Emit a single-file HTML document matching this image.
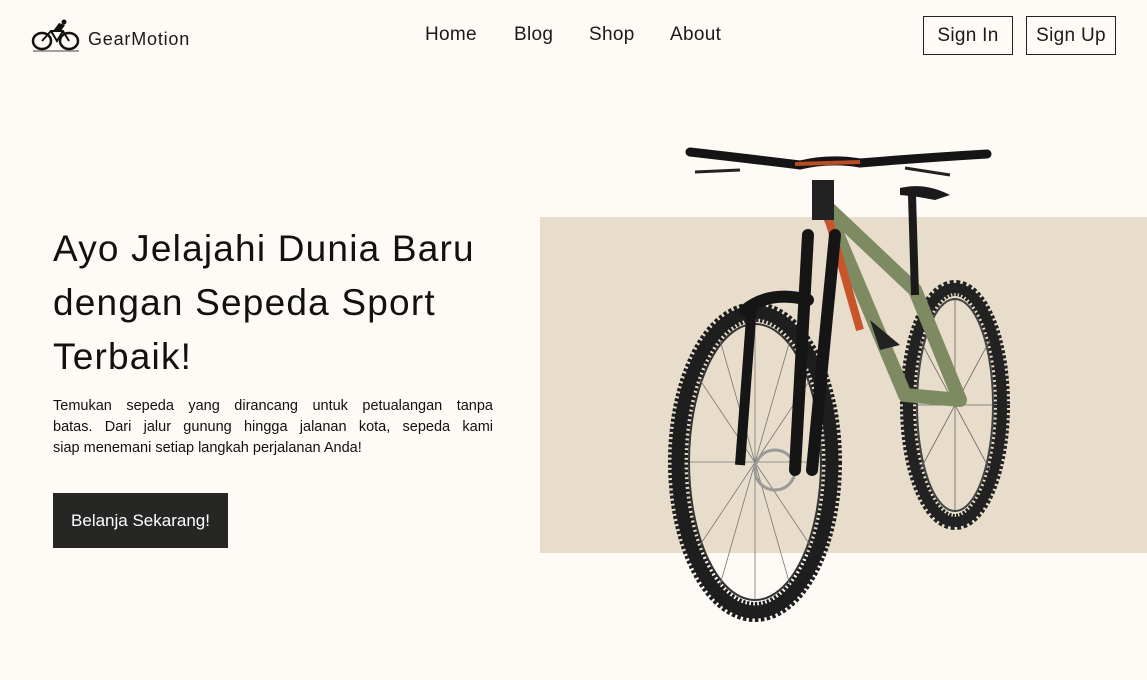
<!DOCTYPE html>
<html><head><meta charset="utf-8"><style>
*{margin:0;padding:0;box-sizing:border-box}
body{width:1147px;height:680px;overflow:hidden;background:#fefbf6;font-family:"Liberation Sans",sans-serif;color:#111;position:relative}
.logo{position:absolute;left:31px;top:19px;display:flex;align-items:center}
.logo span{font-size:18px;margin-left:7px;margin-top:6px;color:#1a1a1a;letter-spacing:0.8px}
nav{position:absolute;top:24px;left:425px;font-size:19px}
nav a{position:absolute;white-space:nowrap;color:#1a1a1a;text-decoration:none;letter-spacing:0.3px}
.btn{position:absolute;top:16px;height:39px;border:1.5px solid #222;font-size:19px;display:flex;align-items:center;justify-content:center;color:#1a1a1a;letter-spacing:0.3px}
h1{position:absolute;left:53px;top:222px;font-size:37px;font-weight:normal;line-height:54px;letter-spacing:1.2px;color:#111;width:520px}
p{position:absolute;left:53px;top:396px;width:440px;font-size:14.5px;line-height:21px;color:#111}
p span{display:block;text-align:justify;text-align-last:justify;white-space:nowrap}
p span.l{text-align-last:left}
.cta{position:absolute;left:53px;top:493px;width:175px;height:55px;background:#262624;color:#fff;font-size:17px;display:flex;align-items:center;justify-content:center}
.bg{position:absolute;left:540px;top:217px;width:607px;height:336px;background:#e8ddcb}
svg.bike{position:absolute;left:0;top:0}
</style></head><body>
<div class="logo">
<svg width="50" height="34" viewBox="0 0 50 34"><ellipse cx="11" cy="22" rx="9" ry="8" fill="none" stroke="#111" stroke-width="2.5"/><ellipse cx="38" cy="22" rx="9" ry="8" fill="none" stroke="#111" stroke-width="2.5"/><path d="M11 22 L20 12 L32 12 L38 22 M20 12 L26 22 L32 12" fill="none" stroke="#111" stroke-width="2"/><path d="M22 12 L28 4 L34 6 L30 12 Z" fill="#111"/><circle cx="33" cy="3" r="2.5" fill="#111"/><line x1="2" y1="32" x2="48" y2="32" stroke="#444" stroke-width="1"/></svg>
<span>GearMotion</span></div>
<nav><a style="left:0">Home</a><a style="left:89px">Blog</a><a style="left:164px">Shop</a><a style="left:245px">About</a></nav>
<div class="btn" style="left:923px;width:90px">Sign In</div>
<div class="btn" style="left:1026px;width:90px">Sign Up</div>
<h1>Ayo Jelajahi Dunia Baru<br>dengan Sepeda Sport<br>Terbaik!</h1>
<p><span>Temukan sepeda yang dirancang untuk petualangan tanpa</span><span>batas. Dari jalur gunung hingga jalanan kota, sepeda kami</span><span class="l">siap menemani setiap langkah perjalanan Anda!</span></p>
<div class="cta">Belanja Sekarang!</div>
<div class="bg"></div>
<svg class="bike" width="1147" height="680">
<ellipse cx="955" cy="405" rx="47" ry="117" fill="none" stroke="#222" stroke-width="16" stroke-dasharray="3 2"/>
<ellipse cx="955" cy="405" rx="47" ry="117" fill="none" stroke="#222" stroke-width="10"/>
<ellipse cx="955" cy="405" rx="38" ry="106" fill="none" stroke="#444" stroke-width="2"/>
<g stroke="#666" stroke-width="0.8"><line x1="955" y1="300" x2="955" y2="510"/><line x1="920" y1="340" x2="990" y2="470"/><line x1="990" y1="340" x2="920" y2="470"/><line x1="918" y1="405" x2="992" y2="405"/></g>
<path d="M825 205 L905 395 L960 400 L915 290 Z" fill="none" stroke="#7d8a62" stroke-width="14" stroke-linejoin="round"/>
<path d="M826 210 L860 330" stroke="#c8552a" stroke-width="8"/>
<line x1="912" y1="195" x2="915" y2="295" stroke="#1a1a1a" stroke-width="8"/>
<path d="M900 188 Q925 182 950 195 L935 200 Q915 196 900 195Z" fill="#1a1a1a"/>
<path d="M870 320 L900 345 L880 350Z" fill="#222"/>
<ellipse cx="755" cy="462" rx="77" ry="150" fill="none" stroke="#1e1e1e" stroke-width="20" stroke-dasharray="3 2"/>
<ellipse cx="755" cy="462" rx="77" ry="150" fill="none" stroke="#1e1e1e" stroke-width="13"/>
<ellipse cx="755" cy="462" rx="66" ry="138" fill="none" stroke="#333" stroke-width="2"/>
<g stroke="#777" stroke-width="0.8"><line x1="755" y1="325" x2="755" y2="600"/><line x1="700" y1="380" x2="810" y2="545"/><line x1="810" y1="380" x2="700" y2="545"/><line x1="690" y1="462" x2="820" y2="462"/><line x1="720" y1="340" x2="790" y2="585"/><line x1="790" y1="340" x2="720" y2="585"/></g>
<circle cx="775" cy="470" r="20" fill="none" stroke="#999" stroke-width="3"/>
<path d="M808 235 L795 470 M835 235 L812 470 M745 310 Q770 290 808 300" stroke="#151515" stroke-width="12" fill="none" stroke-linecap="round"/>
<path d="M752 305 L740 465" stroke="#151515" stroke-width="10"/>
<rect x="812" y="180" width="22" height="40" fill="#222"/>
<path d="M690 152 Q760 160 800 165 Q830 158 860 163 Q920 158 987 154" stroke="#151515" stroke-width="9" fill="none" stroke-linecap="round"/>
<path d="M795 164 L860 162" stroke="#b94c22" stroke-width="4"/>
<path d="M695 172 L740 170 M905 168 L950 175" stroke="#222" stroke-width="3"/>
</svg>
</body></html>
